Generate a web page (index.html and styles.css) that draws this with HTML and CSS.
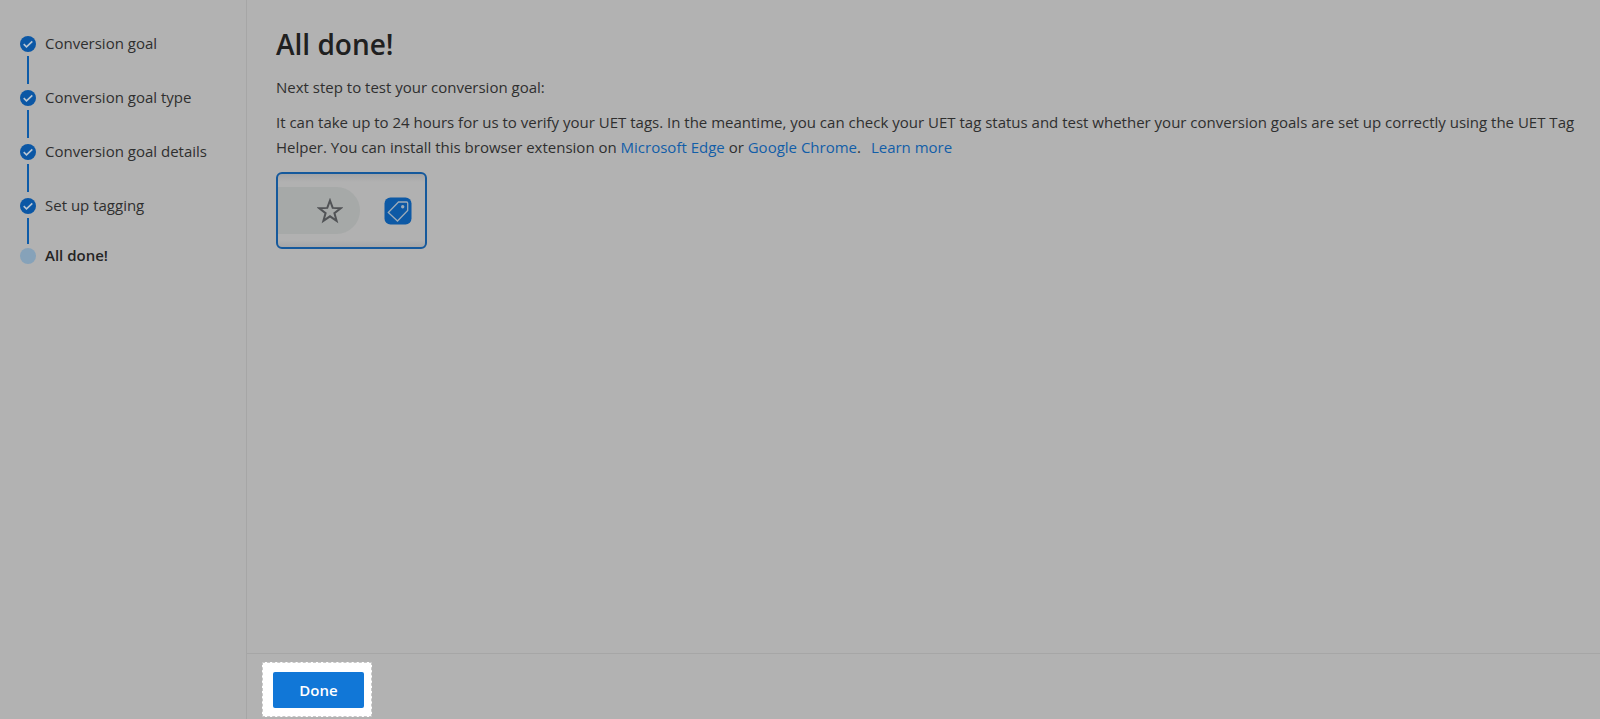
FILE: index.html
```html
<!DOCTYPE html>
<html lang="en">
<head>
    <meta charset="UTF-8">
    <meta name="viewport" content="width=device-width, initial-scale=1.0">
    <title>Conversion goal - All done!</title>
    <link rel="stylesheet" href="styles.css">
</head>
<body>

    <nav class="sidebar" aria-label="Progress">
        <ol class="steps">
            <li class="step">
                <svg class="step-icon" viewBox="0 0 16 16" aria-hidden="true"><circle cx="8" cy="8" r="8"/><path d="M3.700 8.200l2.800 2.600L12.300 5.300"/></svg>
                <span class="step-label">Conversion goal</span>
            </li>
            <li class="step">
                <svg class="step-icon" viewBox="0 0 16 16" aria-hidden="true"><circle cx="8" cy="8" r="8"/><path d="M3.700 8.200l2.800 2.600L12.300 5.300"/></svg>
                <span class="step-label">Conversion goal type</span>
            </li>
            <li class="step">
                <svg class="step-icon" viewBox="0 0 16 16" aria-hidden="true"><circle cx="8" cy="8" r="8"/><path d="M3.700 8.200l2.800 2.600L12.300 5.300"/></svg>
                <span class="step-label">Conversion goal details</span>
            </li>
            <li class="step before-current">
                <svg class="step-icon" viewBox="0 0 16 16" aria-hidden="true"><circle cx="8" cy="8" r="8"/><path d="M3.700 8.200l2.800 2.600L12.300 5.300"/></svg>
                <span class="step-label">Set up tagging</span>
            </li>
            <li class="step current" aria-current="step">
                <svg class="step-icon" viewBox="0 0 16 16" aria-hidden="true"><circle cx="8" cy="8" r="8"/></svg>
                <span class="step-label">All done!</span>
            </li>
        </ol>
    </nav>

    <div class="page">
        <main class="content">
            <h1>All done!</h1>
            <p>Next step to test your conversion goal:</p>
            <p>It can take up to 24 hours for us to verify your UET tags. In the meantime, you can check your UET tag status and test whether your conversion goals are set up correctly using the UET Tag Helper. You can install this browser extension on <a href="#">Microsoft Edge</a> or <a href="#">Google Chrome</a>. <a class="learn-more" href="#">Learn more</a></p>

            <div class="toolbar-preview">
                <div class="address-bar">
                    <svg class="star" viewBox="0 0 26 26" aria-hidden="true"><path d="M13 2.500l2.700 7.400 8 .3-6.300 4.900 2.200 7.700-6.600-4.500-6.600 4.500 2.200-7.700-6.300-4.900 8-.3z"/></svg>
                </div>
                <svg class="tag" viewBox="0 0 28 28" aria-hidden="true">
                    <rect class="tag-bg" x="0.500" y="0.500" width="27" height="27" rx="6"/>
                    <path d="M14.500 5h8q1.200 0 1.200 1.200v7.300L13.500 24 4.300 15.500z"/>
                    <circle cx="18.700" cy="9.800" r="1.700"/>
                </svg>
            </div>
        </main>

        <footer class="footer">
            <div class="highlight">
                <button type="button" class="done-btn">Done</button>
            </div>
        </footer>
    </div>

</body>
</html>
```
FILE: styles.css
```css
* {
    margin: 0;
    padding: 0;
    box-sizing: border-box;
}

body {
    display: flex;
    min-height: 100vh;
    background: #b2b2b2;
    color: #2f2f2f;
    font-family: "Segoe UI", "Open Sans", sans-serif;
    font-size: 15px;
    line-height: 25px;
}

a {
    color: #125ea8;
    text-decoration: none;
}

a:hover {
    text-decoration: underline;
}

/* Steps */
.sidebar {
    flex: 0 0 247px;
    padding: 31px 0 0 20px;
    border-right: 1px solid #a6a6a6;
}

.steps {
    list-style: none;
}

.step {
    display: grid;
    grid-template-columns: 16px 1fr;
    grid-template-rows: 25px 28px;
    column-gap: 9px;
    align-items: center;
    height: 54px;
}

.step::after {
    content: "";
    justify-self: center;
    width: 2px;
    height: 28px;
    background: #0d5ba8;
}

.before-current {
    grid-template-rows: 25px 26px;
    height: 50px;
}

.before-current::after {
    height: 26px;
}

.step-icon {
    width: 16px;
    height: 16px;
    fill: #0b57a5;
}

.step-icon path {
    fill: none;
    stroke: #b9c6d3;
    stroke-width: 1.6;
}

.current {
    font-weight: 600;
    color: #242424;
}

.current::after {
    display: none;
}

.current .step-icon {
    fill: #86a2b9;
}

/* Main */
.page {
    flex: 1;
    display: flex;
    flex-direction: column;
    min-width: 0;
}

.content {
    flex: 1;
    padding: 24px 16px 24px 29px;
}

h1 {
    margin-bottom: 11px;
    color: #202020;
    font-size: 28px;
    font-weight: 600;
    line-height: 40px;
}

.content p {
    margin-bottom: 10px;
}

.learn-more {
    margin-left: 6px;
}

.toolbar-preview {
    display: flex;
    align-items: center;
    gap: 24px;
    width: 151px;
    height: 77px;
    margin-top: 12px;
    border: 2px solid #15599c;
    border-radius: 6px;
    background: linear-gradient(#a3a4a6, #b1b1b1 8px, #b1b1b1 66px, #a5a6a8);
}

.address-bar {
    display: flex;
    align-items: center;
    justify-content: flex-end;
    width: 82px;
    height: 47px;
    padding-right: 17px;
    border-radius: 0 24px 24px 0;
    background: #a6a9a8;
}

.star {
    width: 26px;
    height: 26px;
    fill: none;
    stroke: #515356;
    stroke-width: 2;
}

.tag {
    width: 28px;
    height: 28px;
    fill: none;
    stroke: #9dabb8;
    stroke-width: 1.3;
}

.tag-bg {
    fill: #0d59a5;
    stroke: none;
}

.tag circle {
    fill: #9dabb8;
    stroke: none;
}

/* Footer */
.footer {
    padding: 8px 15px 2px;
    border-top: 1px solid #a6a6a6;
}

.highlight {
    display: inline-block;
    padding: 9px 7px 8px 10px;
    border: 1px dashed #c8c8c8;
    background: #fff;
    vertical-align: top;
}

.done-btn {
    width: 91px;
    height: 36px;
    border: none;
    border-radius: 2px;
    background: #1177d7;
    color: #fff;
    font: inherit;
    font-weight: 600;
    cursor: pointer;
}

.done-btn:hover {
    background: #0f6cc4;
}
```
